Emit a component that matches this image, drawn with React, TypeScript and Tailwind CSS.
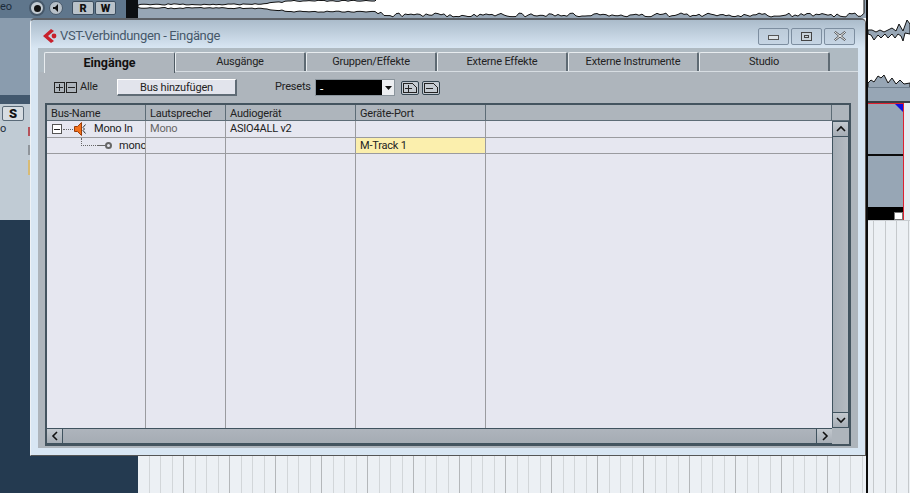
import { ReactNode } from "react";

const uiFont = "font-['Roboto',Arial,sans-serif]";

const TABS = ["Eingänge", "Ausgänge", "Gruppen/Effekte", "Externe Effekte", "Externe Instrumente", "Studio"];
const COLS = "grid-cols-[99px_80px_130px_130px_1fr]";

// small seeded noise so the wave form stays the same on every render
function noise(i: number) {
  const v = Math.sin(i * 12.9898) * 43758.5453;
  return v - Math.floor(v);
}

function topWave() {
  const upper: string[] = [];
  const lower: string[] = [];
  for (let x = 0; x <= 728; x += 3) {
    const n = noise(x);
    if (x < 240) {
      const grow = x < 115 ? 0 : Math.min((x - 115) / 12, 3.5);
      const amp = 1 + n * 1.2 + grow;
      upper.push(`${x},${6 - amp}`);
      lower.push(`${x},${6.5 + amp}`);
    } else {
      upper.push(`${x},-2`);
      const base = x < 250 ? 11 + (x - 240) / 4 : 13;
      lower.push(`${x},${base + n * 4}`);
    }
  }
  return [...upper, ...lower.reverse()].join(" ");
}

function Bevel({ className, children }: { className: string; children?: ReactNode }) {
  return (
    <div className={`flex items-center justify-center border border-[#40535f] bg-gradient-to-b from-[#c3c9cf] to-[#a6adb5] ${className}`}>
      {children}
    </div>
  );
}

function Chevron({ d }: { d: string }) {
  return (
    <svg width="10" height="10" viewBox="0 0 10 10" fill="none" stroke="#111" strokeWidth="1.6">
      <path d={d} />
    </svg>
  );
}

function SmallBox({ minus }: { minus?: boolean }) {
  return (
    <svg width="11" height="11" viewBox="0 0 11 11" fill="none" stroke="#222" shapeRendering="crispEdges">
      <rect x="0.5" y="0.5" width="10" height="10" />
      <path d="M2 5.5h7" />
      {!minus && <path d="M5.5 2v7" />}
    </svg>
  );
}

function PresetButton({ minus }: { minus?: boolean }) {
  return (
    <div className="flex h-[14px] w-[18px] items-center justify-center rounded-[2px] border border-[#33444f] bg-[#c4cbd2]">
      <svg width="14" height="10" viewBox="0 0 14 10" fill="none" stroke="#222" shapeRendering="crispEdges">
        <path d="M0.5 0.5h9l4 4v5h-13z" />
        <path d="M2 5.5h7" />
        {!minus && <path d="M5.5 2v7" />}
      </svg>
    </div>
  );
}

function Speaker() {
  return (
    <svg width="13" height="14" viewBox="0 0 13 14" className="shrink-0">
      <path d="M0.5 4.5h3l4-4v13l-4-4h-3z" fill="#f2701a" stroke="#9a3c08" strokeWidth="1" />
      <path d="M11.5 2.5l-2.5 3 1.5 1.5-1.5 1.5 2.5 3" fill="none" stroke="#333" strokeWidth="1" />
    </svg>
  );
}

function Cell({ className = "", children }: { className?: string; children?: ReactNode }) {
  return <div className={`flex items-center overflow-hidden border-r border-[#9a9b9f] pl-[4px] ${className}`}>{children}</div>;
}

function BusTable() {
  return (
    <div className="mx-[7px] flex h-[343px] flex-col border-2 border-[#44545f] bg-[#aeb5bc] text-[11px] tracking-[-0.2px] text-[#222]">
      <div className="flex h-[16px] border-b border-[#5d6c76]">
        <div className={`grid flex-1 ${COLS}`}>
          {["Bus-Name", "Lautsprecher", "Audiogerät", "Geräte-Port", ""].map((h, i) => (
            <div key={i} className="flex items-center border-r border-[#5d6c76] pl-[4px] pt-[1px]">{h}</div>
          ))}
        </div>
        <div className="w-[17px]" />
      </div>

      <div className="flex min-h-0 flex-1">
        <div className="flex flex-1 flex-col bg-[#e6e7f0]">
          <div className={`grid h-[17px] border-b border-[#9a9b9f] ${COLS}`}>
            <Cell className="!pl-[5px]">
              <div className="flex h-[10px] w-[10px] shrink-0 items-center justify-center border border-[#555] bg-white">
                <div className="h-px w-[6px] bg-[#222]" />
              </div>
              <div className="mx-[1px] w-[10px] shrink-0 border-t border-dotted border-[#666]" />
              <Speaker />
              <span className="ml-[7px] whitespace-nowrap pt-[1px]">Mono In</span>
            </Cell>
            <Cell className="pt-[1px] text-[#666]">Mono</Cell>
            <Cell className="pt-[1px]">ASIO4ALL v2</Cell>
            <Cell />
            <Cell className="border-r-0" />
          </div>
          <div className={`grid h-[16px] border-b border-[#9a9b9f] ${COLS}`}>
            <Cell className="!pl-0">
              <div className="ml-[34px] h-[8px] w-[17px] shrink-0 -translate-y-[4px] border-b border-l border-dotted border-[#666]" />
              <div className="h-px w-[7px] shrink-0 bg-[#666]" />
              <div className="h-[7px] w-[7px] shrink-0 rounded-full border-2 border-[#666] bg-[#e6e7f0]" />
              <span className="ml-[7px] pt-[1px]">mono</span>
            </Cell>
            <Cell />
            <Cell />
            <Cell className="bg-[#fbefad] pt-[1px]">M-Track 1</Cell>
            <Cell className="border-r-0" />
          </div>
          <div className={`grid flex-1 ${COLS}`}>
            <Cell />
            <Cell />
            <Cell />
            <Cell />
            <Cell className="border-r-0" />
          </div>
        </div>

        <div className="flex w-[17px] flex-col bg-gradient-to-r from-[#a4acb4] to-[#b6bcc3]">
          <Bevel className="h-[16px]"><Chevron d="M1 7l4-4 4 4" /></Bevel>
          <div className="flex-1 border-x border-[#40535f]" />
          <Bevel className="h-[16px]"><Chevron d="M1 3l4 4 4-4" /></Bevel>
        </div>
      </div>

      <div className="flex h-[16px]">
        <div className="flex flex-1 border-y border-[#40535f] bg-gradient-to-b from-[#aeb4bc] to-[#a5acb4]">
          <Bevel className="w-[16px] border-y-0 border-l-0"><Chevron d="M7 1L3 5l4 4" /></Bevel>
          <div className="flex-1" />
          <Bevel className="w-[16px] border-y-0 border-r-0"><Chevron d="M3 1l4 4-4 4" /></Bevel>
        </div>
        <div className="w-[17px]" />
      </div>
    </div>
  );
}

function ConnectionsWindow() {
  return (
    <div className={`absolute left-[30px] top-[18px] flex h-[438px] w-[836px] flex-col rounded-tl-[5px] rounded-tr-[5px] border-t-2 border-l border-r border-b border-t-[#5c6066] border-l-[#eef2f6] border-r-[#5c5652] border-b-[#555] bg-[#d8e6f3] px-[7px] pb-[7px] ${uiFont}`}>
      <div className="-mx-[7px] flex h-[28px] items-center rounded-t-[4px] bg-gradient-to-b from-[#abbccb] to-[#d8e6f3] pl-[11px] pr-[10px] pt-[4px]">
        <svg width="16" height="16" viewBox="0 0 16 16" className="mr-[2px]">
          <path d="M9 1L1 8l8 7 3-2-6-5 6-5z" fill="#c8202c" />
          <circle cx="12" cy="8" r="2.4" fill="#c8202c" />
        </svg>
        <span className="text-[13px] tracking-[-0.35px] text-[#46586a]">VST-Verbindungen - Eingänge</span>
        <div className="ml-auto flex gap-[2px]">
          {[0, 1, 2].map((i) => (
            <div key={i} className={`flex h-[17px] items-center justify-center rounded-[2px] border border-[#7d8ea0] bg-gradient-to-b from-[#bccbd9] to-[#c6d5e4] ${i === 0 ? "w-[31px]" : "w-[31px]"}`}>
              {i === 0 && <div className="mt-[2px] h-[5px] w-[11px] border border-[#555] bg-[#dde3e8]" />}
              {i === 1 && <div className="flex h-[9px] w-[11px] items-center justify-center border border-[#444] bg-[#c8d2da]"><div className="h-[3px] w-[5px] border border-[#444]" /></div>}
              {i === 2 && (
                <svg width="12" height="10" viewBox="0 0 12 10">
                  <path d="M1.5 0.5l4.5 3.5 4.5-3.5 1 1-4 3.5 4 3.5-1 1-4.5-3.5-4.5 3.5-1-1 4-3.5-4-3.5z" fill="#f2f4f6" stroke="#444" strokeWidth="0.9" />
                </svg>
              )}
            </div>
          ))}
        </div>
      </div>

      <div className="flex min-h-0 flex-1 flex-col bg-[#aeb5bc]">
        <div className="flex h-[24px] items-end bg-[#afbac2] pl-[6px]">
          <div className="flex h-[20px] w-full border-b border-[#d7dde2]">
            {TABS.map((tab, i) => (
              <div
                key={tab}
                className={
                  i === 0
                    ? "-mb-px flex h-[21px] w-[131px] items-center justify-center rounded-t-[2px] border-l border-r border-t border-l-[#e8ecef] border-r-[#4e5a63] border-t-[#e8ecef] bg-[#aeb5bc] text-[12.5px] font-bold text-[#111]"
                    : "flex w-[131px] items-center justify-center rounded-t-[2px] border-l border-r-2 border-t border-l-[#e8ecef] border-r-[#5e6a73] border-t-[#e8ecef] bg-[#aeb5bc] pt-[1px] text-[11px] tracking-[-0.2px] text-[#222]"
                }
              >
                {tab}
              </div>
            ))}
          </div>
        </div>

        <div className="flex h-[31px] items-center pl-[16px] text-[11px] tracking-[-0.2px] text-[#222]">
          <SmallBox />
          <div className="ml-[1px]"><SmallBox minus /></div>
          <span className="ml-[3px] w-[37px]">Alle</span>
          <button className="h-[17px] w-[120px] border-r-2 border-b-2 border-t border-l border-t-white border-l-white border-r-[#5f6b75] border-b-[#5f6b75] bg-[#e2e4ec] text-[11px] leading-none text-[#222]">
            Bus hinzufügen
          </button>
          <span className="ml-[38px] w-[40px]">Presets</span>
          <div className="flex h-[17px] w-[80px] border border-[#8b959d] bg-black">
            <span className="pl-[4px] text-[12px] leading-[19px] text-white">-</span>
            <div className="ml-auto flex w-[12px] items-center justify-center bg-[#eceef1]">
              <svg width="7" height="4" viewBox="0 0 7 4"><path d="M0 0h7L3.5 4z" fill="#111" /></svg>
            </div>
          </div>
          <div className="ml-[6px]"><PresetButton /></div>
          <div className="ml-[3px]"><PresetButton minus /></div>
        </div>

        <BusTable />
      </div>
    </div>
  );
}

export default function App() {
  return (
    <div className={`relative flex h-[493px] w-[910px] overflow-hidden bg-[#243a50] ${uiFont}`}>
      <div className="flex w-[138px] flex-col">
        <div className="flex h-[18px] items-start bg-[#5f768c]">
          <span className="w-[29px] text-[11px] leading-[14px] text-[#1c2c3c]">eo</span>
          <div className="flex h-[16px] w-[16px] items-center justify-center rounded-full border-2 border-[#46586a] bg-[#c4ccd3]">
            <div className="h-[7px] w-[7px] rounded-full bg-[#111]" />
          </div>
          <div className="ml-[4px] mt-[1px] flex h-[14px] w-[14px] items-center justify-center rounded-full border border-[#46586a] bg-[#b7c0c8]">
            <svg width="8" height="8" viewBox="0 0 8 8"><path d="M1 3h2l3-3v8L3 5H1z" fill="#111" /></svg>
          </div>
          <div className="ml-[9px] mt-[1px] flex h-[14px] w-[22px] items-center justify-center rounded-[2px] border border-[#3c4e60] bg-[#b9c2ca] text-[11px] font-black leading-none text-[#111]">R</div>
          <div className="ml-px mt-[1px] flex h-[14px] w-[21px] items-center justify-center rounded-[2px] border border-[#3c4e60] bg-[#b9c2ca] text-[11px] font-black leading-none text-[#111]">W</div>
          <div className="ml-auto h-full w-[12px] bg-[#0c0f12]" />
        </div>
        <div className="h-[77px] bg-[#8a9cae]" />
        <div className="h-[9px] bg-[#42586e]" />
        <div className="flex h-[116px] flex-col bg-[#c0cbd4]">
          <div className="ml-[2px] mt-[2px] flex h-[15px] w-[22px] items-center justify-center rounded-[2px] border border-[#5a6a78] bg-[#d7dde2] text-[13px] font-black leading-none text-[#111]">S</div>
          <span className="mt-[1px] text-[11px] leading-[14px] text-[#1c2c3c]">o</span>
        </div>
      </div>

      <div className="absolute left-[28px] top-[127px] h-[9px] w-[2px] bg-[#b5525a]" />
      <div className="absolute left-[28px] top-[145px] h-[10px] w-[2px] bg-[#8f959b]" />
      <div className="absolute left-[28px] top-[160px] h-[15px] w-[2px] bg-[#d8bb74]" />

      <div className="flex w-[728px] flex-col">
        <div className="h-[18px] bg-[#97a6b5]">
          <svg width="728" height="18" viewBox="0 0 728 18" className="block">
            <polygon points={topWave()} fill="#fff" stroke="#111" strokeWidth="1" />
          </svg>
        </div>
        <div className="flex-1 bg-white" />
        <div className="flex h-[37px] bg-[#ecf0f4]">
          {Array.from({ length: 64 }, (_, i) => (
            <div key={i} className={`h-full w-[11.5px] shrink-0 border-r ${i % 4 === 3 ? "border-[#b4b7ba]" : "border-[#d2d6d9]"}`} />
          ))}
        </div>
      </div>

      <div className="w-[2px] bg-[#0c0c0c]" />

      <div className="flex flex-1 flex-col bg-white">
        <div className="h-[87px]">
          <svg width="42" height="87" viewBox="0 0 42 87" className="block">
            <polygon points="0,30 4,30 8,32 12,30 16,32 20,30 24,28 28,31 31,24 35,31 39,20 42,24 42,34 37,33 35,41 33,36 30,34 27,38 24,34 20,38 17,34 13,38 10,35 6,40 3,35 0,34" fill="#97a6b5" stroke="#111" strokeWidth="1" />
            <polygon points="0,83 3,80 6,82 10,76 13,78 16,75 20,83 24,78 28,84 32,80 36,84 42,83 42,88 0,88" fill="#97a6b5" stroke="#111" strokeWidth="1" />
          </svg>
        </div>
        <div className="h-[14px] border-t border-[#6f7f8e] bg-[#97a6b5]" />
        <div className="h-[2px] bg-[#3a3f45]" />
        <div className="flex h-[117px]">
          <div className="relative flex w-[36px] flex-col border-r border-t border-r-[#e02030] border-t-[#e02030] bg-[#97a6b5]">
            <div className="absolute right-0 top-0 h-0 w-0 border-l-[8px] border-t-[8px] border-l-transparent border-t-[#1010e0]" />
            <div className="mt-[50px] h-[2px] bg-[#0c0c0c]" />
            <div className="mt-auto h-[13px] bg-black" />
            <div className="absolute bottom-0 right-0 h-[8px] w-[9px] border border-[#777] bg-white" />
          </div>
          <div className="flex-1 bg-[#e8edf2]" />
        </div>
        <div className="flex flex-1 border-t border-[#c9cdd1] bg-[#ecf0f4]">
          {[6, 12, 11, 12].map((w, i) => (
            <div key={i} className="h-full border-r border-[#c5c9cc]" style={{ width: w }} />
          ))}
        </div>
      </div>

      <ConnectionsWindow />
    </div>
  );
}
